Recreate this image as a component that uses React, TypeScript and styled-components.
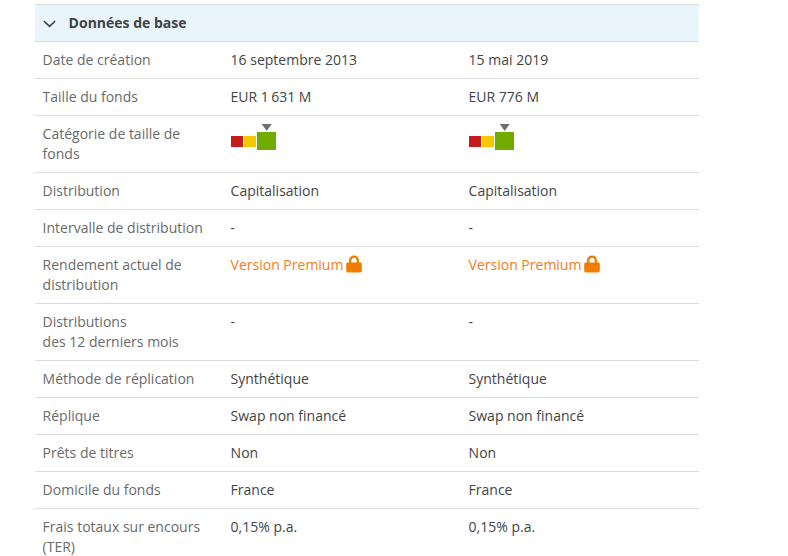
import React from "react";
import styled, { createGlobalStyle } from "styled-components";

const Global = createGlobalStyle`
  html, body { margin: 0; padding: 0; background: #fff; overflow: hidden; height: 556px; }
  body { font-family: "Open Sans", sans-serif; font-size: 14px; line-height: 20px; color: #444; }
`;

const Page = styled.div`
  width: 664px;
  margin: 4px 0 0 35px;
`;

const Header = styled.div`
  display: flex;
  align-items: center;
  height: 36px;
  background: #e9f5fb;
  border-top: 1px solid #dcdcdc;
  border-bottom: 1px solid #dcdcdc;
  padding-left: 8px;
  font-weight: 700;
  color: #3f4347;
`;

const HeaderTitle = styled.span`
  margin-left: 11.6px;
`;

const Row = styled.div`
  display: grid;
  grid-template-columns: 188px 238px 238px;
  border-bottom: 1px solid #dcdcdc;
  &:last-child { border-bottom: 0; }
`;

const Label = styled.div`
  padding: 8px 8px 8px 7.6px;
  color: #6a6a6a;
`;

const Value = styled.div`
  padding: 8px 8px 8px 7.6px;
  color: #444;
`;

const Premium = styled.span`
  display: inline-flex;
  align-items: center;
  gap: 3px;
  color: #f07d1a;
`;

const Gauge = styled.svg`
  display: block;
`;

const LockIcon = styled.svg`
  display: block;
  margin-top: -2px;
`;

const SizeGauge = () => (
  <Gauge width="46" height="28" viewBox="0 0 46 28">
    <path d="M30.700 0h10l-5 7z" fill="#6f6f6f" />
    <rect x="0" y="12" width="12" height="11" fill="#c41a1a" />
    <rect x="13" y="12" width="12" height="11" fill="#f5c900" />
    <rect x="26" y="8" width="19" height="18" fill="#72ab00" />
  </Gauge>
);

const Lock = () => (
  <LockIcon width="16" height="18" viewBox="0 0 16 18">
    <path
      d="M3 7.500V5.400C3 2.600 5.200.4 8 .4s5 2.200 5 5v2.100h1.200c.9 0 1.600.7 1.600 1.600v6.700c0 .9-.7 1.600-1.600 1.600H1.800C.9 17.400.2 16.700.2 15.800V9.100c0-.9.7-1.600 1.600-1.600zm2.300 0h5.400V5.400C10.700 3.900 9.500 2.700 8 2.700S5.300 3.900 5.300 5.400z"
      fill="#f07d00"
    />
  </LockIcon>
);

const Chevron = () => (
  <svg width="14" height="9" viewBox="0 0 14 9">
    <path d="M.8 2l5.700 5.400L12.200 2" fill="none" stroke="#3f4347" strokeWidth="1.500" />
  </svg>
);

const PremiumCell = () => (
  <Premium>
    Version Premium <Lock />
  </Premium>
);

type RowData = { label: React.ReactNode; a: React.ReactNode; b?: React.ReactNode };

const rows: RowData[] = [
  { label: "Date de création", a: "16 septembre 2013", b: "15 mai 2019" },
  { label: "Taille du fonds", a: "EUR 1\u2009631 M", b: "EUR 776 M" },
  { label: "Catégorie de taille de fonds", a: <SizeGauge />, b: <SizeGauge /> },
  { label: "Distribution", a: "Capitalisation" },
  { label: "Intervalle de distribution", a: "-" },
  { label: "Rendement actuel de distribution", a: <PremiumCell />, b: <PremiumCell /> },
  { label: <>Distributions<br />des 12 derniers mois</>, a: "-" },
  { label: "Méthode de réplication", a: "Synthétique" },
  { label: "Réplique", a: "Swap non financé" },
  { label: "Prêts de titres", a: "Non" },
  { label: "Domicile du fonds", a: "France" },
  { label: "Frais totaux sur encours (TER)", a: "0,15% p.a." },
];

export default function App() {
  return (
    <Page>
      <Global />
      <Header>
        <Chevron />
        <HeaderTitle>Données de base</HeaderTitle>
      </Header>
      {rows.map((r, i) => (
        <Row key={i}>
          <Label>{r.label}</Label>
          <Value>{r.a}</Value>
          <Value>{r.b ?? r.a}</Value>
        </Row>
      ))}
    </Page>
  );
}
